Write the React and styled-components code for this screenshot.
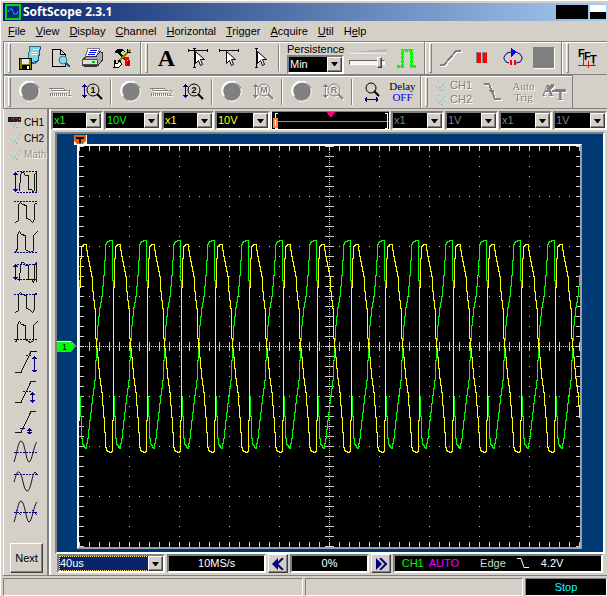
import styled, { createGlobalStyle, css } from 'styled-components';

const GREEN = '#00ff00';
const YELLOW = '#ffff00';

const DIV = 50;
const COLS = 10;
const ROWS = 8;
const PERIOD = 34;

const yellowCycle = [
  [1, 112], [2, 100], [4, 98], [6, 98], [7, 104], [9, 115], [12, 130], [13, 145], [15, 162],
  [16, 192], [18, 211], [20, 232], [22, 246], [24, 271], [26, 301], [27, 304], [30, 306],
  [32, 305], [33, 274], [34, 180], [34, 141],
];

const greenCycle = [
  [1, 270], [2, 292], [3, 298], [6, 302], [8, 292], [10, 274], [13, 249], [15, 234], [16, 214],
  [17, 194], [18, 179], [20, 161], [22, 150], [24, 129], [26, 98], [27, 96], [30, 94],
  [32, 94], [33, 134], [34, 187], [34, 250],
];

// Steps one pixel column at a time, so the trace stays one pixel wide
const buildTrace = (cycle) => {
  const points = [];
  for (let n = -1; n <= 15; n += 1) {
    cycle.forEach(([x, y]) => points.push([x + n * PERIOD, y]));
  }
  let [px, py] = points[0];
  let d = `M${px + 0.5} ${py + 0.5}`;
  points.slice(1).forEach(([x, y]) => {
    for (let col = px + 1; col <= x; col += 1) {
      const at = Math.round(py + ((y - py) * (col - px)) / (x - px));
      d += `H${col + 0.5}V${at + 0.5}`;
    }
    if (x === px) d += `V${y + 0.5}`;
    px = x;
    py = y;
  });
  return d;
};

const range = (count, step) => Array.from({ length: count }, (_, i) => i * step);

const gridDots = () => {
  let d = '';
  range(ROWS - 1, DIV).forEach((y) => {
    range(51, 10).forEach((x) => { d += `M${x} ${y + DIV}h1v1h-1z`; });
  });
  range(COLS - 1, DIV).forEach((x) => {
    range(41, 10).forEach((y) => { d += `M${x + DIV} ${y}h1v1h-1z`; });
  });
  return d;
};

const axisMarks = () => {
  let d = '';
  range(51, 10).forEach((x) => {
    d += `M${x} 196h1v9h-1zM${x} 0h1v5h-1zM${x} 396h1v5h-1z`;
  });
  range(41, 10).forEach((y) => {
    d += `M246 ${y}h9v1h-9zM0 ${y}h5v1h-5zM497 ${y}h4v1h-4z`;
  });
  range(250, 2).forEach((x) => { d += `M${x} 200h1v1h-1z`; });
  range(200, 2).forEach((y) => { d += `M250 ${y}h1v1h-1z`; });
  return d;
};

/* ---------- icons ---------- */

const Icon = ({ w = 24, h = 24, children }) => (
  <svg width={w} height={h} viewBox={`0 0 ${w} ${h}`} fill="none" shapeRendering="crispEdges" aria-hidden="true">
    {children}
  </svg>
);

const SaveIcon = () => (
  <Icon w={24} h={26}>
    <path d="M12 1.500h10.500L20 15.500l-3 3H9z" fill="#7fd4e0" stroke="#2b6f7c" />
    <path d="M15 4.500h6M14 7.500h5M13 9.500h6" stroke="#fff" />
    <path d="M13 17.500l7-1 2.500-14" stroke="#204890" />
    <path d="M1.500 13.500h12v11h-12z" fill="#808000" stroke="#000" />
    <path d="M4 14h7v5H4z" fill="#e8e8e8" />
    <path d="M4 20h8v4H4z" fill="#000" />
    <path d="M9 21h2v3H9z" fill="#fff" />
  </Icon>
);

const PreviewIcon = () => (
  <Icon w={20} h={22}>
    <path d="M1.500 2.500h8l5 5v12h-13z" fill="#d8d4cc" stroke="#000" />
    <path d="M9.500 2.500v5h5" stroke="#000" />
    <circle cx="12" cy="13" r="4" fill="#7fdce8" stroke="#407080" shapeRendering="auto" />
    <path d="M15 16l4 4" stroke="#205080" strokeWidth="2" />
  </Icon>
);

const PrintIcon = () => (
  <Icon w={22} h={22}>
    <path d="M7 1.500h11.500L15 10.500H4z" fill="#fff" stroke="#808080" />
    <path d="M9 3.500h7M8 5.500h7M7 7.500h7" stroke="#0000ff" />
    <path d="M1.500 12.500l4-3H15l4-5 2 1v8l-4 5H2z" fill="#a8a8a8" stroke="#303030" />
    <path d="M1.500 12.500h15v5h-15z" fill="#e0e0e0" stroke="#505050" />
    <path d="M11 14h3v2h-3z" fill="#00c000" />
    <path d="M3 18h13v2H3z" fill="#303030" />
  </Icon>
);

const ToolsIcon = () => (
  <Icon w={20} h={20}>
    <path d="M1 4l4-3h5l2 3-3-1-3 3z" fill="#000" />
    <path d="M6 5l8 8" stroke="#000" strokeWidth="2" />
    <path d="M17 2L6 13" stroke="#808000" strokeWidth="2" />
    <path d="M14.500 1v3h3" stroke="#000" />
    <path d="M2 12v3h3l1-3 3 4-3 3H1z" fill="#fff" stroke="#000" />
    <path d="M11 9h5v3h-2v6h-2v-6z" fill="#ff0000" />
    <path d="M15 12h2v6h-3v-3z" fill="#c00000" />
  </Icon>
);

const CursorIcon = ({ vertical, horizontal }) => (
  <Icon w={22} h={24}>
    {horizontal && <path d="M1 4.500h20M1.500 3v3M20.500 3v3" stroke="#000" />}
    {vertical && <path d="M7.500 2v20M6 2.500h3M6 21.500h3" stroke="#000" />}
    <path
      d="M8.500 5.500v12l3-3 2 5 2-1-2-5h4z"
      fill="#fff"
      stroke="#000"
      shapeRendering="auto"
    />
  </Icon>
);

const PulseIcon = () => (
  <Icon w={22} h={20}>
    <path d="M1 18.500h5v-17h9v17h5" stroke="#808080" />
    <path d="M1 18h5v-16h9v16h5" stroke={GREEN} strokeWidth="3" strokeDasharray="3 1" />
  </Icon>
);

const LineIcon = () => (
  <Icon w={24} h={20}>
    <path d="M2 18h4L18 4h5" stroke="#fff" strokeWidth="2" />
    <path d="M1 17h4L17 3h5" stroke="#808080" strokeWidth="2" />
  </Icon>
);

const PauseIcon = () => (
  <Icon w={12} h={12}>
    <path d="M1 1h4v10H1zM7 1h4v10H7z" fill="#ff0000" />
    <path d="M.5 11V.5H5M6.500 11V.5H11" stroke="#808080" />
  </Icon>
);

const LoopIcon = () => (
  <Icon w={20} h={20}>
    <path d="M6 15l-3-1-2-3V9l3-4 4-1h5l4 2 2 3v2l-2 3-4 1" stroke="#000080" shapeRendering="auto" />
    <path d="M8 0l6 4-6 5z" fill="#0000ff" />
    <path d="M8 12v5M12 12v5" stroke="#ff0000" strokeWidth="2" />
  </Icon>
);

const StopIcon = () => (
  <Icon w={24} h={24}>
    <path d="M2 2h21v21H2z" fill="#fff" />
    <path d="M1 1h21v21H1z" fill="#808080" />
  </Icon>
);

const FftIcon = () => (
  <Icon w={24} h={22}>
    <path d="M2 18.500h18M7.500 7v11M12.500 14v7M17.500 16v3" stroke="#ff0000" />
    <g fill="#000" fontFamily="Liberation Sans, sans-serif" fontWeight="bold" fontSize="11">
      <text x="2" y="10">F</text>
      <text x="8" y="13">F</text>
      <text x="14" y="16">T</text>
    </g>
  </Icon>
);

const KnobIcon = () => (
  <Icon w={22} h={22}>
    <g shapeRendering="auto">
      <circle cx="11" cy="11" r="9" fill="#808080" />
      <path d="M3 15a9 9 0 0 1 12-13" stroke="#fff" strokeWidth="2" />
      <path d="M20 8a10 10 0 0 1-12 12" stroke="#fff" />
      <path d="M20 7a10 10 0 0 0-17 0" stroke="#808080" />
    </g>
  </Icon>
);

const PencilIcon = ({ label }) => (
  <Icon w={24} h={12}>
    <path d="M1 2.500h13l3 2H4z" fill="#fff" stroke="#808080" />
    <path d="M1 8.500h17" stroke="#808080" strokeWidth="3" strokeDasharray="1 1" />
    <text x="18" y="10" fill="#808080" fontFamily="Liberation Sans, sans-serif" fontSize="9">{label}</text>
  </Icon>
);

const ZoomIcon = ({ label, off }) => (
  <Icon w={22} h={20}>
    <path d="M3.500 2v14M1 4.500h5M2 3.500h3M1 13.500h5M2 14.500h3" stroke={off ? '#808080' : '#000080'} />
    <g shapeRendering="auto" stroke={off ? '#808080' : '#000'}>
      <circle cx="12" cy="8" r="6" />
      <path d="M16 12l5 5" strokeWidth="2" />
    </g>
    <text
      x="12"
      y="11"
      textAnchor="middle"
      fill={off ? '#808080' : '#000'}
      fontFamily="Liberation Sans, sans-serif"
      fontWeight="bold"
      fontSize="9"
    >
      {label}
    </text>
  </Icon>
);

const SpanIcon = () => (
  <Icon w={20} h={22}>
    <g shapeRendering="auto" stroke="#000">
      <circle cx="9" cy="7" r="5" />
      <path d="M12 10l5 5" strokeWidth="2" />
    </g>
    <path d="M3 18.500h13M4.500 16v5M3.500 17v3M14.500 16v5M15.500 17v3" stroke="#000080" />
  </Icon>
);

const FallingIcon = () => (
  <Icon w={20} h={20}>
    <path d="M1 2h5l6 15h6" stroke="#808080" strokeWidth="2" />
    <path d="M5 8h6v6z" fill="#808080" />
  </Icon>
);

const SpeckIcon = ({ checked }) => (
  <Icon w={14} h={14}>
    {checked && <path d="M0 2h13v5H0z" fill="#202028" />}
    {checked && <path d="M3 4h1v1H3zM8 3h1v1H8zM6 5h1v1H6z" fill="#b02020" />}
    <path d="M5 3h1v1H5zM11 4h1v1h-1zM6 9h2v1H6zM10 8h1v1h-1zM8 12h2v1H8zM3 8h1v1H3z" fill="#40d0d0" />
    <path d="M9 6h1v1H9zM5 11h1v1H5z" fill="#a0a0a0" />
  </Icon>
);

const pulseWave = 'M6.500 21.500L7.500 5.500L8.500 2.500H10.500L12.500 5.500H15.500V19.500H18.500L20.500 22.500L21.500 19.500V4.500L23.500 2.500V21.500';
const topWave = 'M2.500 22.500L5.500 20.500V4.500L7.500 2.500L9.500 4.500L13.500 5.500V18.500L16.500 19.500L19.500 22.500L21.500 19.500V4.500L24.500 2.500';
const baseWave = 'M2.500 22.500L4.500 18.500V4.500L6.500 1.500L8.500 4.500L12.500 5.500V19.500L15.500 21.500L17.500 22.500L20.500 20.500V5.500L24.500 1.500';

const measures = [
  { name: 'Peak to peak', wave: pulseWave, guide: 'M4 1.500h20M4 22.500h20', arrow: 'M2.500 2v20M0 4.500h5M1 3.500h3M0 19.500h5M1 20.500h3' },
  { name: 'Maximum', wave: topWave, guide: 'M1 1.500h23' },
  { name: 'Minimum', wave: baseWave, guide: 'M1 22.500h23' },
  { name: 'Amplitude', wave: pulseWave, guide: 'M4 4.500h20M4 19.500h20', arrow: 'M2.500 4v16M0 6.500h5M1 5.500h3M0 17.500h5M1 18.500h3' },
  { name: 'Top', wave: topWave, guide: 'M1 4.500h23' },
  { name: 'Base', wave: baseWave, guide: 'M1 19.500h23' },
  { name: 'Overshoot', wave: 'M2 22.500h6L18 1.500h6', guide: 'M13 5.500h6', arrow: 'M21.500 6v16M19 8.500h5M20 7.500h3M19 20.500h5M20 21.500h3' },
  { name: 'Mean', wave: 'M2 22.500h6L18 1.500h5', guide: 'M10 11.500h8', arrow: 'M19.500 12v11M17 14.500h5M18 13.500h3M17 20.500h5M18 21.500h3' },
  { name: 'Preshoot', wave: 'M2 22.500h6L18 1.500h5', guide: 'M7 18.500h6', arrow: 'M16.500 18v6M14 20.500h5M15 19.500h3M14 22.500h5M15 23.500h3' },
  { name: 'Cycle mean', wave: 'M1 22C4 14 5 1 8 1c4 0 5 21 8 21S21 4 24 2', guide: 'M1 12.500h24', curve: true },
  { name: 'RMS', wave: 'M1 12C3 5 4 1 6 2c4 2 4 18 8 19s5-18 8-19l3 3', guide: 'M1 4.500h24', curve: true },
  { name: 'Crossing', wave: 'M1 22C4 14 5 1 8 1c4 0 5 21 8 21S21 4 24 2', guide: 'M1 12.500h24M3 10l5 5M19 10l5 5', curve: true },
];

const MeasureIcon = ({ wave, guide, arrow, curve }) => (
  <Icon w={26} h={25}>
    <path d={wave} stroke="#101810" shapeRendering={curve ? 'auto' : 'crispEdges'} />
    <path d={guide} stroke="#000080" strokeDasharray="2 1" />
    {arrow && <path d={arrow} stroke="#000080" />}
  </Icon>
);

const ArrowDown = () => (
  <svg width="7" height="4" viewBox="0 0 7 4" aria-hidden="true"><path d="M0 0h7L4 4H3z" fill="#000" /></svg>
);

/* ---------- data ---------- */

const menus = [
  ['', 'F', 'ile'], ['', 'V', 'iew'], ['', 'D', 'isplay'], ['', 'C', 'hannel'], ['', 'H', 'orizontal'],
  ['', 'T', 'rigger'], ['', 'A', 'cquire'], ['', 'U', 'til'], ['H', 'e', 'lp'],
];

const leftCombos = [
  { label: 'CH1 probe', value: 'x1', color: GREEN },
  { label: 'CH1 scale', value: '10V', color: GREEN },
  { label: 'CH2 probe', value: 'x1', color: YELLOW },
  { label: 'CH2 scale', value: '10V', color: YELLOW },
];

const rightCombos = [
  { label: 'Math probe', value: 'x1', color: '#808080' },
  { label: 'Math scale', value: '1V', color: '#808080' },
  { label: 'Reference probe', value: 'x1', color: '#808080' },
  { label: 'Reference scale', value: '1V', color: '#808080' },
];

const Combo = ({ id, label, value, color, focused }) => (
  <ComboBox>
    <ComboSelect id={id} aria-label={label} defaultValue={value} $color={color} $focused={focused}>
      <option>{value}</option>
    </ComboSelect>
    <ComboArrow><ArrowDown /></ComboArrow>
  </ComboBox>
);

const Graticule = () => (
  <Screen viewBox="0 0 501 401" shapeRendering="crispEdges" role="img" aria-label="CH1 and CH2 traces">
    <path d={gridDots()} fill="#c8c8c8" />
    <path d={axisMarks()} fill="#d0d0d0" />
    <path d={buildTrace(greenCycle)} fill="none" stroke={GREEN} />
    <path d={buildTrace(yellowCycle)} fill="none" stroke={YELLOW} />
  </Screen>
);

const App = () => {
  return (
    <>
      <GlobalStyle />
      <Window>
        <TitleBar>
          <svg width="16" height="16" viewBox="0 0 16 16" aria-hidden="true">
            <path d="M0 0h16v16H0z" fill="#00d820" />
            <path d="M2 2h12v12H2z" fill="#002880" />
            <path d="M3 8l2-3h2l2 5h3l1-3" fill="none" stroke="#30a0ff" />
          </svg>
          <Title>SoftScope 2.3.1</Title>
          <CaptionButton aria-label="Minimize and maximize" $wide />
          <CaptionButton aria-label="Close" />
        </TitleBar>

        <MenuBar>
          {menus.map(([before, key, after]) => (
            <MenuItem key={key + after}>{before}<u>{key}</u>{after}</MenuItem>
          ))}
        </MenuBar>

        <Toolbar>
          <Band>
            <Grip />
            <ToolButton aria-label="Save"><SaveIcon /></ToolButton>
            <ToolButton aria-label="Print preview"><PreviewIcon /></ToolButton>
            <ToolButton aria-label="Print"><PrintIcon /></ToolButton>
            <ToolButton aria-label="Options"><ToolsIcon /></ToolButton>
          </Band>
          <Band>
            <Grip />
            <ToolButton><Letter>A</Letter></ToolButton>
            <ToolButton aria-label="Cross cursor"><CursorIcon vertical horizontal /></ToolButton>
            <ToolButton aria-label="Horizontal cursor"><CursorIcon horizontal /></ToolButton>
            <ToolButton aria-label="Vertical cursor"><CursorIcon vertical /></ToolButton>
            <Separator $wide />
            <Persistence>
              <label htmlFor="persistence">Persistence</label>
              <Combo id="persistence" value="Min" color="#fff" />
            </Persistence>
            <SliderBox>
              <svg width="38" height="5" viewBox="0 0 38 5" aria-hidden="true">
                <path d="M0 3L38 0v4H0z" fill="#b8b8b0" />
                <path d="M0 4h38" stroke="#fff" />
              </svg>
              <Slider type="range" min="0" max="100" defaultValue="92" aria-label="Brightness" />
            </SliderBox>
            <ToolButton aria-label="Pulse"><PulseIcon /></ToolButton>
          </Band>
          <Band>
            <Grip />
            <ToolButton aria-label="Vectors"><LineIcon /></ToolButton>
            <ToolButton aria-label="Pause"><PauseIcon /></ToolButton>
            <ToolButton aria-label="Single run"><LoopIcon /></ToolButton>
            <ToolButton aria-label="Stop acquisition"><StopIcon /></ToolButton>
          </Band>
          <Band $grow>
            <Grip />
            <ToolButton aria-label="FFT"><FftIcon /></ToolButton>
          </Band>
        </Toolbar>

        <Toolbar>
          <Band>
            <Grip />
            <ToolButton aria-label="CH1 position"><KnobIcon /></ToolButton>
            <ToolButton aria-label="CH1 level" disabled><PencilIcon label="1" /></ToolButton>
            <ToolButton aria-label="Zoom CH1"><ZoomIcon label="1" /></ToolButton>
            <Separator />
            <ToolButton aria-label="CH2 position"><KnobIcon /></ToolButton>
            <ToolButton aria-label="CH2 level" disabled><PencilIcon label="2" /></ToolButton>
            <ToolButton aria-label="Zoom CH2"><ZoomIcon label="2" /></ToolButton>
            <Separator />
            <ToolButton aria-label="Math position"><KnobIcon /></ToolButton>
            <ToolButton aria-label="Zoom math" disabled><ZoomIcon label="M" off /></ToolButton>
            <Separator />
            <ToolButton aria-label="Reference position"><KnobIcon /></ToolButton>
            <ToolButton aria-label="Zoom reference" disabled><ZoomIcon label="R" off /></ToolButton>
            <Separator />
            <ToolButton aria-label="Zoom time base"><SpanIcon /></ToolButton>
            <ToolButton><Caption>Delay<b>OFF</b></Caption></ToolButton>
          </Band>
          <Band $closed>
            <Grip />
            <SourceList>
              <SourceButton disabled><SpeckIcon />CH1</SourceButton>
              <SourceButton disabled><SpeckIcon />CH2</SourceButton>
            </SourceList>
            <ToolButton aria-label="Falling edge" disabled><FallingIcon /></ToolButton>
            <ToolButton disabled><Caption>Auto<span>Trig</span></Caption></ToolButton>
            <ToolButton aria-label="AT" disabled>
              <Icon w={26} h={22}>
                <g fill="#808080" fontFamily="Liberation Serif, serif" fontWeight="bold" fontSize="16">
                  <text x="0" y="15">A</text>
                  <text x="13" y="19">T</text>
                </g>
                <path d="M1 13l8-10h3v3zM10 9h14v2H10z" fill="#808080" />
              </Icon>
            </ToolButton>
          </Band>
        </Toolbar>

        <Body>
          <Sidebar>
            <ChannelButton><SpeckIcon checked />CH1</ChannelButton>
            <ChannelButton><SpeckIcon />CH2</ChannelButton>
            <ChannelButton disabled><SpeckIcon />Math</ChannelButton>
            <MeasureList>
              {measures.map((m) => (
                <MeasureButton key={m.name} aria-label={m.name}><MeasureIcon {...m} /></MeasureButton>
              ))}
            </MeasureList>
            <NextButton>Next</NextButton>
          </Sidebar>

          <Main>
            <ChannelRow>
              {leftCombos.map((c) => <Combo key={c.label} {...c} />)}
              <PositionBar>
                <svg width="100%" height="18" viewBox="0 0 116 18" shapeRendering="crispEdges" role="img" aria-label="Record position">
                  <path d="M0 9.500h116" stroke={GREEN} />
                  <path d="M5 1.500H2.500v15H5M112 1.500h2.500v15H112" stroke="#fff" fill="none" />
                  <path d="M0 6h5v10H0z" fill="#ff8040" />
                  <path d="M2 8h1v6H2z" fill="#fff" />
                  <path d="M54 0h9l-4 5h-1z" fill="#ff0080" />
                </svg>
              </PositionBar>
              {rightCombos.map((c) => <Combo key={c.label} {...c} />)}
            </ChannelRow>

            <Scope>
              <ScreenFrame>
                <Graticule />
              </ScreenFrame>
              <TriggerMarker>
                <svg width="13" height="10" viewBox="0 0 13 10" aria-hidden="true">
                  <path d="M0 0h13v10H0z" fill="#fff" />
                  <path d="M0 0h12v6L9 9H3L0 6z" fill="#e86000" />
                  <path d="M2 2h8v2H7v4H5V4H2z" fill="#000" />
                </svg>
              </TriggerMarker>
              <LevelMarker>
                <svg width="20" height="12" viewBox="0 0 20 12" aria-hidden="true">
                  <path d="M0 .5h14l5 5" fill="none" stroke="#fff" />
                  <path d="M0 1h14l4 5-4 5H0z" fill={GREEN} />
                  <text x="5" y="9" fontFamily="Liberation Sans, sans-serif" fontSize="9" fill="#000">1</text>
                </svg>
              </LevelMarker>
            </Scope>

            <ReadoutRow>
              <Combo label="Time base" value="40us" color="#fff" focused />
              <Readout>10MS/s</Readout>
              <StepButton aria-label="Scroll left">
                <svg width="12" height="12" viewBox="0 0 12 12" aria-hidden="true">
                  <path d="M6 0v12L0 6z" fill="#000080" />
                  <path d="M11 0L5 6l6 6" fill="none" stroke="#000080" strokeWidth="2" />
                </svg>
              </StepButton>
              <Readout>0%</Readout>
              <StepButton aria-label="Scroll right">
                <svg width="12" height="12" viewBox="0 0 12 12" aria-hidden="true">
                  <path d="M1 0v12l6-6z" fill="#000080" />
                  <path d="M5 0l6 6-6 6" fill="none" stroke="#000080" strokeWidth="2" />
                </svg>
              </StepButton>
              <TriggerReadout>
                <TriggerText $color={GREEN}>CH1</TriggerText>
                <TriggerText $color="#ff00ff">AUTO</TriggerText>
                <TriggerText $color="#c0dcc0" $spaced>Edge</TriggerText>
                <svg width="12" height="11" viewBox="0 0 12 11" aria-hidden="true">
                  <path d="M0 .5h4l3 9h5" fill="none" stroke="#fff" />
                </svg>
                <TriggerText $color="#fff">4.2V</TriggerText>
              </TriggerReadout>
            </ReadoutRow>
          </Main>
        </Body>

        <StatusBar>
          <StatusPanel />
          <StatusPanel />
          <StatusPanel $active>Stop</StatusPanel>
        </StatusBar>
      </Window>
    </>
  );
};

export default App;


const GlobalStyle = createGlobalStyle`
  * {
    box-sizing: border-box;
  }
  body {
    margin: 0;
    background: #d4d0c8;
  }
  button, select, input {
    font: inherit;
    color: inherit;
  }
`;

const raised = css`
  border: 1px solid;
  border-color: #fff #404040 #404040 #fff;
  box-shadow: inset -1px -1px 0 #808080;
  background: #d4d0c8;
`;

const sunken = css`
  border: 2px solid;
  border-color: #808080 #fff #fff #808080;
  background: #000;
`;

const Window = styled.div`
  display: flex;
  flex-direction: column;
  min-height: 100vh;
  padding: 2px 1px 0 2px;
  border-top: 1px solid #fff;
  border-left: 1px solid #fff;
  background: #d4d0c8;
  color: #000;
  font-family: "Liberation Sans", Arial, sans-serif;
  font-size: 11px;
  line-height: 13px;
`;

const TitleBar = styled.header`
  display: flex;
  align-items: center;
  gap: 2px;
  height: 18px;
  padding: 0 1px 0 2px;
  background: linear-gradient(to right, #0a246a, #a6caf0);
`;

const Title = styled.h1`
  flex: 1;
  margin: 0;
  color: #fff;
  font-family: "Noto Sans", "Open Sans", sans-serif;
  font-size: 12px;
  font-weight: bold;
  line-height: 16px;
`;

const CaptionButton = styled.button`
  width: ${({ $wide }) => ($wide ? '32px' : '16px')};
  height: 14px;
  padding: 0;
  border: 0;
  background: ${({ $wide }) => ($wide ? '#000' : 'linear-gradient(#fff 50%, #000 50%)')};
`;

const MenuBar = styled.nav`
  display: flex;
  height: 20px;
`;

const MenuItem = styled.button`
  padding: 0 5px;
  border: 0;
  background: none;
`;

const Toolbar = styled.div`
  display: flex;
  height: 34px;
  border-bottom: 1px solid #808080;
`;

const Band = styled.div`
  display: flex;
  align-items: center;
  flex: ${({ $grow }) => ($grow ? '1' : 'none')};
  padding: 0 2px 0 4px;
  border-left: 1px solid #808080;
  border-top: 1px solid #808080;
  border-right: ${({ $closed }) => ($closed ? '1px solid #808080' : '0')};
  box-shadow: inset 1px 1px 0 #fff;
`;

const Grip = styled.div`
  width: 3px;
  height: 30px;
  margin-right: 3px;
  border: 1px solid;
  border-color: #fff #808080 #808080 #fff;
`;

const Separator = styled.div`
  width: 2px;
  height: 26px;
  margin: ${({ $wide }) => ($wide ? '0 7px 0 3px' : '0 3px')};
  border-left: 1px solid #808080;
  border-right: 1px solid #fff;
`;

const ToolButton = styled.button`
  display: flex;
  align-items: center;
  justify-content: center;
  flex: none;
  width: 31px;
  height: 30px;
  padding: 0;
  border: 0;
  background: none;
  &:disabled {
    color: #808080;
    filter: drop-shadow(1px 1px 0 #fff);
  }
`;

const Letter = styled.span`
  font-family: "Liberation Serif", serif;
  font-size: 24px;
  font-weight: bold;
  line-height: 26px;
`;

const Caption = styled.span`
  display: flex;
  flex-direction: column;
  align-items: center;
  font-family: "Liberation Serif", serif;
  font-size: 11px;
  line-height: 11px;
  b {
    color: #0000ff;
    font-weight: normal;
  }
`;

const Persistence = styled.div`
  width: 57px;
  label {
    display: block;
    line-height: 12px;
    white-space: nowrap;
  }
`;

const ComboBox = styled.div`
  position: relative;
  min-width: 0;
  height: 19px;
  ${sunken}
`;

const ComboSelect = styled.select`
  appearance: none;
  display: block;
  width: 100%;
  height: 100%;
  padding: 0 16px 0 1px;
  border: 0;
  border-radius: 0;
  outline: 0;
  background: #000;
  color: ${({ $color }) => $color};
  ${({ $focused }) => $focused && css`
    padding-left: 0;
    border: 1px dotted #ffe080;
    background: #0a246a;
  `}
`;

const ComboArrow = styled.span`
  position: absolute;
  top: 0;
  right: 0;
  bottom: 0;
  display: flex;
  align-items: center;
  justify-content: center;
  width: 15px;
  pointer-events: none;
  ${raised}
`;

const SliderBox = styled.div`
  display: flex;
  flex-direction: column;
  gap: 3px;
  width: 38px;
  margin: 0 4px 0 5px;
`;

const Slider = styled.input`
  appearance: none;
  width: 36px;
  height: 11px;
  margin: 0;
  background: none;
  &::-webkit-slider-runnable-track {
    height: 5px;
    border: 1px solid;
    border-color: #606060 #fff #fff #606060;
    background: #f4f4f0;
  }
  &::-webkit-slider-thumb {
    appearance: none;
    width: 5px;
    height: 11px;
    margin-top: -4px;
    border-radius: 0;
    ${raised}
  }
`;

const SourceList = styled.div`
  width: 46px;
`;

const SourceButton = styled.button`
  display: flex;
  align-items: center;
  gap: 3px;
  height: 14px;
  padding: 0 0 0 2px;
  border: 0;
  background: none;
  color: #808080;
  text-shadow: 1px 1px 0 #fff;
`;

const Body = styled.div`
  display: flex;
  flex: 1;
`;

const Sidebar = styled.aside`
  display: flex;
  flex-direction: column;
  flex: none;
  width: 46px;
  padding: 5px 0 2px 4px;
  border-left: 1px solid #fff;
  border-right: 2px solid #808080;
`;

const ChannelButton = styled.button`
  display: flex;
  align-items: center;
  gap: 2px;
  height: 16px;
  padding: 0;
  border: 0;
  background: none;
  font-size: 10px;
  svg {
    flex: none;
  }
  &:disabled {
    color: #909090;
    text-shadow: 1px 1px 0 #fff;
  }
`;

const MeasureList = styled.div`
  display: flex;
  flex-direction: column;
  padding: 5px 0 0 5px;
`;

const MeasureButton = styled.button`
  display: flex;
  align-items: center;
  width: 28px;
  height: 30px;
  padding: 0;
  border: 0;
  background: none;
`;

const NextButton = styled.button`
  width: 33px;
  height: 30px;
  margin: auto 0 0 2px;
  padding: 0;
  ${raised}
`;

const Main = styled.main`
  flex: 1;
  min-width: 0;
  padding: 2px 0;
  border-left: 2px solid #fff;
`;

const ChannelRow = styled.div`
  display: grid;
  grid-template-columns: 52fr 57fr 52fr 55fr 119fr 53fr 53fr 53fr 54fr;
  gap: 1px;
  padding-bottom: 2px;
`;

const PositionBar = styled.div`
  height: 19px;
  border: 1px solid;
  border-color: #808080 #fff #fff #fff;
  background: #000;
  svg {
    display: block;
  }
`;

const Scope = styled.div`
  position: relative;
  margin: 0 2px 0 4px;
  padding: 10px 21px 3px 20px;
  border: 2px solid;
  border-color: #808080 #fff #fff #808080;
  background: #003973;
`;

const ScreenFrame = styled.div`
  border: 2px solid;
  border-color: #fff #a0a0a0 #a0a0a0 #fff;
  background: #000;
`;

const Screen = styled.svg`
  display: block;
  width: 100%;
  height: auto;
`;

const TriggerMarker = styled.div`
  position: absolute;
  top: 1px;
  left: 17px;
  line-height: 0;
`;

const LevelMarker = styled.div`
  position: absolute;
  top: calc(50% - 2px);
  left: 0;
  line-height: 0;
`;

const ReadoutRow = styled.div`
  display: grid;
  grid-template-columns: 109fr 100fr 20px 79fr 20px 212fr;
  gap: 2px;
  margin: 0 4px 0 6px;
`;

const Readout = styled.output`
  display: flex;
  align-items: center;
  justify-content: center;
  height: 19px;
  ${sunken}
  color: #fff;
`;

const StepButton = styled.button`
  display: flex;
  align-items: center;
  justify-content: center;
  height: 19px;
  padding: 0;
  ${raised}
`;

const TriggerReadout = styled(Readout)`
  justify-content: flex-start;
  gap: 5px;
  padding-left: 7px;
  svg {
    margin: 0 7px 0 6px;
  }
`;

const TriggerText = styled.span`
  color: ${({ $color }) => $color};
  margin-left: ${({ $spaced }) => ($spaced ? '16px' : '0')};
`;

const StatusBar = styled.footer`
  display: grid;
  grid-template-columns: 300fr 218fr 82fr;
  gap: 2px;
  height: 21px;
  padding-top: 2px;
  border-top: 1px solid #808080;
`;

const StatusPanel = styled.div`
  display: flex;
  align-items: center;
  justify-content: center;
  border: 1px solid;
  border-color: #808080 #fff #fff #808080;
  background: ${({ $active }) => ($active ? '#000' : 'none')};
  color: #00ffff;
`;
